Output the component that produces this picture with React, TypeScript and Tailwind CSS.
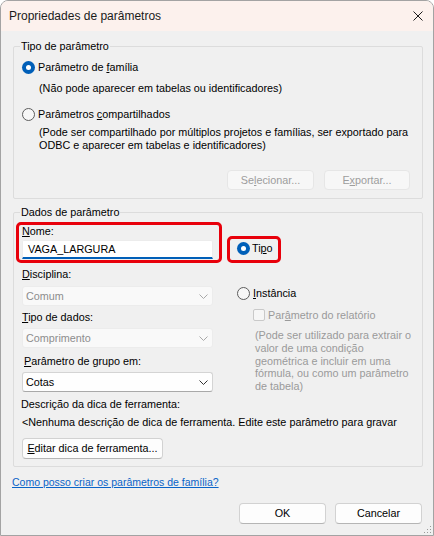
import React from "react";

const Radio = ({ checked }: { checked?: boolean }) =>
  checked ? (
    <span className="w-[13px] h-[13px] rounded-full bg-[#005fb8] flex items-center justify-center shrink-0">
      <span className="w-[5px] h-[5px] rounded-full bg-white" />
    </span>
  ) : (
    <span className="w-[13px] h-[13px] rounded-full border border-[#5d5d5d] bg-[#f7f7f7] shrink-0" />
  );

const Chevron = ({ color }: { color: string }) => (
  <svg width="9" height="5" viewBox="0 0 9 5" className="shrink-0">
    <path d="M0.5 0.5 L4.5 4.5 L8.5 0.5" fill="none" stroke={color} strokeWidth="1" />
  </svg>
);

const Dropdown = ({ value, disabled }: { value: string; disabled?: boolean }) => (
  <div
    className={
      disabled
        ? "h-[20px] w-[191px] flex items-center justify-between pl-[3px] pr-[4px] bg-[#f9f9f9] border border-[#ececec] rounded-[3px] text-[#8d8d8d]"
        : "h-[20px] w-[191px] flex items-center justify-between pl-[3px] pr-[4px] bg-[#fefefe] border border-[#d4d4d4] border-b-[#a9a9a9] rounded-[3px] text-black"
    }
  >
    <span>{value}</span>
    <Chevron color={disabled ? "#a8a8a8" : "#333333"} />
  </div>
);

export default function App() {
  return (
    <div className="relative w-[434px] h-[536px] flex flex-col bg-[#f0f0f0] border border-[#a3a3a3] rounded-t-[8px] overflow-hidden font-['Liberation_Sans',Arial,sans-serif] text-[10.8px] text-black">
      {/* title bar */}
      <div className="h-[30px] shrink-0 flex items-center justify-between pl-[8px] pr-[10px] bg-[#fcf1ed]">
        <span className="text-[12px] text-[#1a1a1a]">Propriedades de parâmetros</span>
        <svg width="10" height="10" viewBox="0 0 10 10">
          <path d="M0.5 0.5 L9.5 9.5 M9.5 0.5 L0.5 9.5" stroke="#1c1c1c" strokeWidth="1" />
        </svg>
      </div>

      <div className="flex flex-col pl-[12px] pr-[10px] pt-[7px]">
        {/* Tipo de parâmetro */}
        <fieldset className="border border-[#dcdcdc] rounded-[2px] pb-[8px]">
          <legend className="ml-[6px] px-[1px] leading-[16px]">Tipo de parâmetro</legend>
          <div className="flex flex-col pl-[8px] pr-[12px]">
            <div className="mt-[5px] h-[16px] flex items-center gap-[3px]">
              <Radio checked />
              <span>
                Parâmetro de <u>f</u>amília
              </span>
            </div>
            <div className="mt-[5px] h-[16px] leading-[16px] pl-[17px]">
              (Não pode aparecer em tabelas ou identificadores)
            </div>
            <div className="mt-[10px] h-[16px] flex items-center gap-[3px]">
              <Radio />
              <span>
                Parâmetros <u>c</u>ompartilhados
              </span>
            </div>
            <div className="mt-[4px] leading-[13px] pl-[17px] whitespace-nowrap">
              (Pode ser compartilhado por múltiplos projetos e famílias, ser exportado para
              <br />
              ODBC e aparecer em tabelas e identificadores)
            </div>
            <div className="mt-[18px] flex justify-end gap-[10px]">
              <button className="w-[87px] h-[20px] bg-[#f7f7f7] border border-[#e6e6e6] rounded-[4px] text-[#9d9d9d]">
                Se<u>l</u>ecionar...
              </button>
              <button className="w-[86px] h-[20px] bg-[#f7f7f7] border border-[#e6e6e6] rounded-[4px] text-[#9d9d9d]">
                E<u>x</u>portar...
              </button>
            </div>
          </div>
        </fieldset>

        {/* Dados de parâmetro */}
        <fieldset className="mt-[5px] border border-[#dcdcdc] rounded-[2px] pb-[7px]">
          <legend className="ml-[6px] px-[1px] leading-[16px]">Dados de parâmetro</legend>
          <div className="flex flex-col pt-[2px]">
            <div className="flex items-start">
              {/* left column */}
              <div className="flex flex-col">
                <div className="ml-[2px] w-[206px] border-[3px] border-[#e8000b] rounded-[5px] pl-[3px] pb-[1px]">
                  <div className="leading-[13px]">
                    <u>N</u>ome:
                  </div>
                  <div className="mt-[2px] w-[191px] h-[19px] flex items-center pl-[5px] bg-white border border-[#ececec] border-b-2 border-b-[#005fb8] rounded-t-[2px]">
                    VAGA_LARGURA
                  </div>
                </div>
                <div className="flex flex-col pl-[8px]">
                  <div className="mt-[5px] leading-[13px]">
                    <u>D</u>isciplina:
                  </div>
                  <div className="mt-[5px]">
                    <Dropdown value="Comum" disabled />
                  </div>
                  <div className="mt-[5px] leading-[13px]">
                    <u>T</u>ipo de dados:
                  </div>
                  <div className="mt-[4px]">
                    <Dropdown value="Comprimento" disabled />
                  </div>
                  <div className="mt-[7px] ml-[2px] leading-[13px]">
                    <u>P</u>arâmetro de grupo em:
                  </div>
                  <div className="mt-[4px]">
                    <Dropdown value="Cotas" />
                  </div>
                </div>
              </div>

              {/* right column */}
              <div className="ml-[5px] flex flex-col">
                <div className="mt-[14px] w-[54px] h-[27px] border-[3px] border-[#e8000b] rounded-[5px] flex items-center gap-[2px] pl-[7px] pb-[3px]">
                  <Radio checked />
                  <span>
                    Ti<u>p</u>o
                  </span>
                </div>
                <div className="mt-[22px] h-[16px] flex items-center gap-[3px] pl-[10px]">
                  <Radio />
                  <span>
                    <u>I</u>nstância
                  </span>
                </div>
                <div className="mt-[6px] h-[16px] flex items-center gap-[3px] pl-[26px] text-[#9a9a9a]">
                  <span className="w-[12px] h-[12px] border border-[#c9c9c9] bg-[#f6f6f6] rounded-[2px] shrink-0" />
                  <span>
                    Par<u>â</u>metro do relatório
                  </span>
                </div>
                <div className="mt-[6px] pl-[28px] leading-[12.8px] text-[#9a9a9a] whitespace-nowrap">
                  (Pode ser utilizado para extrair o
                  <br />
                  valor de uma condição
                  <br />
                  geométrica e incluir em uma
                  <br />
                  fórmula, ou como um parâmetro
                  <br />
                  de tabela)
                </div>
              </div>
            </div>

            <div className="flex flex-col pl-[7px]">
              <div className="mt-[5px] leading-[13px]">Descrição da dica de ferramenta:</div>
              <div className="mt-[5px] leading-[13px] pl-[1px] whitespace-nowrap">
                &lt;Nenhuma descrição de dica de ferramenta. Edite este parâmetro para gravar
              </div>
              <div className="mt-[9px] pl-[1px]">
                <button className="w-[141px] h-[21px] bg-[#fdfdfd] border border-[#d2d2d2] border-b-[#b5b5b5] rounded-[4px]">
                  <u>E</u>ditar dica de ferramenta...
                </button>
              </div>
            </div>
          </div>
        </fieldset>

        <a className="mt-[9px] -ml-[1px] leading-[13px] text-[10.5px] text-[#0a64c8] underline self-start">
          Como posso criar os parâmetros de família?
        </a>

        <div className="mt-[14px] flex justify-end gap-[9px] pr-[1px]">
          <button className="w-[87px] h-[21px] bg-[#fdfdfd] border border-[#d2d2d2] border-b-[#b5b5b5] rounded-[4px]">
            OK
          </button>
          <button className="w-[87px] h-[21px] bg-[#fdfdfd] border border-[#d2d2d2] border-b-[#b5b5b5] rounded-[4px]">
            Cancelar
          </button>
        </div>
      </div>

      {/* resize grip */}
      <svg width="9" height="9" viewBox="0 0 9 9" className="absolute right-[1px] bottom-[1px]">
        <rect x="7" y="1" width="1" height="1" fill="#9a9a9a" />
        <rect x="4" y="4" width="1" height="1" fill="#9a9a9a" />
        <rect x="7" y="4" width="1" height="1" fill="#9a9a9a" />
        <rect x="1" y="7" width="1" height="1" fill="#9a9a9a" />
        <rect x="4" y="7" width="1" height="1" fill="#9a9a9a" />
        <rect x="7" y="7" width="1" height="1" fill="#9a9a9a" />
      </svg>
    </div>
  );
}
